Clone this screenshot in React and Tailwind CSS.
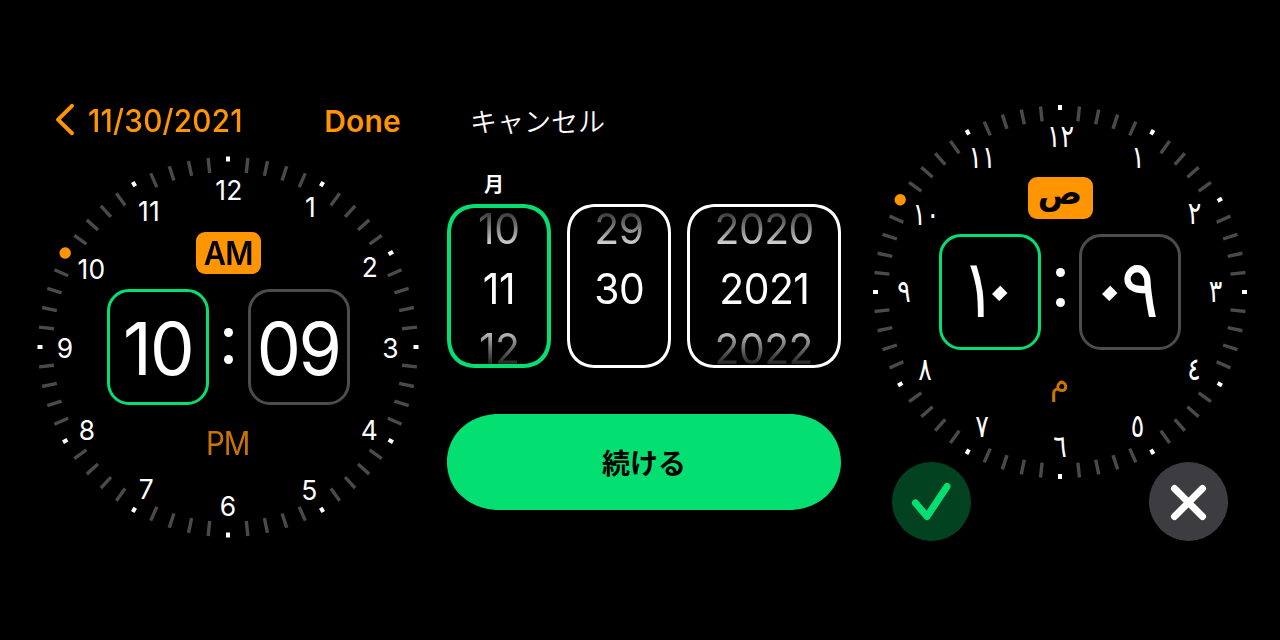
const LATIN = ["12", "1", "2", "3", "4", "5", "6", "7", "8", "9", "10", "11"];
const LATIN_POS = [[229, 190], [310.5, 207], [370, 267], [390.5, 348], [369.5, 430], [309.5, 489.5], [228, 506], [146.5, 489], [87, 430], [65, 348], [91.5, 269], [149, 211]];
const ARABIC = ["١٢", "١", "٢", "٣", "٤", "٥", "٦", "٧", "٨", "٩", "١٠", "١١"];
const ARABIC_POS = [[1060.5, 137], [1138, 158], [1194.5, 214], [1215.5, 291.5], [1194, 369.5], [1137.5, 426.5], [1060, 446.5], [982, 426.5], [925, 369.5], [904, 291.5], [926, 214.5], [982, 158]];

function Dial({ size, r, labels, pos, ox, oy, arabic }) {
  const c = size / 2;
  return (
    <svg width={size} height={size} viewBox={`0 0 ${size} ${size}`} className="col-start-1 row-start-1 overflow-visible">
      {Array.from({ length: 60 }, (_, i) => {
        const a = `rotate(${i * 6} ${c} ${c})`;
        if (i === 50) return <circle key={i} cx={c} cy={c - r + 2.5} r="5.7" fill="#ff9500" transform={a} />;
        return i % 5 === 0 ? (
          <rect key={i} x={c - 2} y={c - r} width="4" height="5" fill="#fff" transform={a} />
        ) : (
          <rect key={i} x={c - 1.7} y={c - r + 0.5} width="3.4" height="15" fill="#4a4a4c" transform={a} />
        );
      })}
      {labels.map((t, i) => (
        <text
          key={t}
          transform={`translate(${pos[i][0] - ox} ${pos[i][1] - oy + 10}) scale(${arabic ? 0.8 : 0.96} 1)`}
          textAnchor="middle"
          fill="#fff"
          className={arabic ? "font-['DejaVu_Sans',sans-serif] text-[31.5px] tracking-[-4.5px]" : "font-['Inter',sans-serif] text-[27.5px] tracking-[0.4px]"}
        >
          {t}
        </text>
      ))}
    </svg>
  );
}

function TimeBox({ active, children }) {
  return (
    <div className={`flex h-[116px] w-[102px] items-center justify-center rounded-[22px] border-3 ${active ? "border-[#04df71]" : "border-[#4c4c4c]"}`}>
      {children}
    </div>
  );
}

function ArabicZero({ width }) {
  return (
    <span className={`flex justify-center ${width}`}>
      <span className="origin-[50%_calc(50%+5px)] translate-y-[-4px] rotate-45 text-[94px] leading-none">٠</span>
    </span>
  );
}

function Wheel({ width, border, values }) {
  return (
    <div className={`flex h-[164px] flex-col items-center justify-center overflow-hidden rounded-[30px] pt-[4px] [corner-shape:superellipse(1.2)] ${width} ${border}`}>
      {values.map((v, i) => (
        <div
          key={i}
          className={`flex h-[60px] shrink-0 scale-x-95 items-center bg-clip-text text-[43px] leading-none tracking-[-0.6px] ${
            i === 0
              ? "bg-linear-to-b from-[#222] from-15% to-[#ddd] to-80% text-transparent"
              : i === 1
                ? "text-white"
                : "bg-linear-to-b from-[#ddd] from-15% to-[#111] to-85% text-transparent"
          }`}
        >
          {v}
        </div>
      ))}
    </div>
  );
}

export default function App() {
  return (
    <div className="flex h-[640px] w-[1280px] overflow-hidden bg-black font-['Inter','Noto_Sans_CJK_JP',sans-serif] text-white">
      <section className="flex w-[447px] shrink-0 flex-col pt-[100px] pl-[37px]">
        <header className="flex h-[42px] w-[364px] items-center justify-between text-[#ff9500]">
          <div className="flex items-center pl-[18px]">
            <svg width="20" height="34" viewBox="0 0 20 34" fill="none" stroke="#ff9500" strokeWidth="4" strokeLinecap="round" strokeLinejoin="round" className="overflow-visible">
              <path d="M17 1.9 L3 15.6 L17 29.2" />
            </svg>
            <span className="ml-[13px] origin-left scale-x-96 text-[31px] font-medium tracking-[0.2px]">11/30/2021</span>
          </div>
          <span className="text-[30px] font-semibold tracking-[0.2px]">Done</span>
        </header>
        <div className="mt-[14px] grid h-[382px] w-[382px] justify-items-center">
          <Dial size={382} r={190.5} labels={LATIN} pos={LATIN_POS} ox={37} oy={156} />
          <div className="col-start-1 row-start-1 flex flex-col items-center pt-[76px]">
            <div className="flex h-[42px] w-[65px] items-center justify-center rounded-[9px] bg-[#ff9500] pt-[2px]">
              <span className="scale-x-[0.93] text-[33px] font-semibold tracking-[-1px] text-black">AM</span>
            </div>
            <div className="mt-[15px] flex items-center">
              <TimeBox active><span className="scale-x-97 pt-[3px] pl-[1px] text-[73px] leading-none tracking-[-2px]">10</span></TimeBox>
              <div className="flex w-[39px] flex-col items-center gap-[18px] pb-[2px]">
                <i className="size-[9px] rounded-full bg-white" />
                <i className="size-[9px] rounded-full bg-white" />
              </div>
              <TimeBox><span className="scale-x-96 pt-[3px] text-[73px] leading-none tracking-[-2.5px]">09</span></TimeBox>
            </div>
            <span className="mt-[19px] scale-x-[0.92] text-[32px] leading-[40px] tracking-[-1px] text-[#c97600]">PM</span>
          </div>
        </div>
      </section>

      <section className="flex w-[394px] shrink-0 flex-col pt-[100px]">
        <span className="h-[42px] pl-[23px] font-['Noto_Sans_CJK_JP',sans-serif] text-[27px] leading-[42px] font-[350]">キャンセル</span>
        <span className="mt-[28px] h-[28px] w-[94px] text-center font-['Noto_Sans_CJK_JP',sans-serif] text-[20px] leading-[28px] font-bold">月</span>
        <div className="mt-[6px] flex gap-4">
          <Wheel width="w-[104px]" border="border-4 border-[#04df71]" values={["10", "11", "12"]} />
          <Wheel width="w-[104px]" border="border-3 border-white" values={["29", "30", ""]} />
          <Wheel width="w-[154px]" border="border-3 border-white" values={["2020", "2021", "2022"]} />
        </div>
        <button className="mt-[46px] h-[96px] rounded-[52px/48px] bg-[#04df71] font-['Noto_Sans_CJK_JP',sans-serif] text-[28px] font-bold text-black [corner-shape:superellipse(1.05)]">続ける</button>
      </section>

      <section className="flex flex-col pt-[105px] pl-[32px]">
        <div className="grid h-[374px] w-[374px] justify-items-center">
          <Dial size={374} r={187} labels={ARABIC} pos={ARABIC_POS} ox={873} oy={105} arabic />
          <div className="col-start-1 row-start-1 flex flex-col items-center pt-[72px] font-['DejaVu_Sans',sans-serif]">
            <div className="flex h-[42px] w-[65px] items-center justify-center rounded-[9px] bg-[#ff9500] pb-[12px]">
              <span className="text-[33px] leading-none font-bold text-black">ص</span>
            </div>
            <div className="mt-[15px] flex items-center">
              <TimeBox active>
                <span className="flex items-center pl-[2px]">
                  <span className="flex w-[18px] translate-x-[-2px] scale-x-[0.8] justify-center pb-[6px] text-[81px] leading-none">١</span>
                  <ArabicZero width="w-[20px]" />
                </span>
              </TimeBox>
              <div className="flex w-[38px] flex-col items-center gap-[21px] pb-[9px]">
                <i className="size-[9px] rounded-full bg-white" />
                <i className="size-[9px] rounded-full bg-white" />
              </div>
              <TimeBox>
                <span className="flex items-center pr-[8px]">
                  <ArabicZero width="w-[30px]" />
                  <span className="flex w-[32px] translate-x-[-1px] scale-x-[0.87] justify-center pb-[6px] text-[81px] leading-none">٩</span>
                </span>
              </TimeBox>
            </div>
            <span className="mt-[12px] scale-x-90 text-[35px] leading-[40px] text-[#c97600]">م</span>
          </div>
        </div>
        <div className="mt-[-17px] flex w-[336px] justify-between self-center">
          <div className="flex size-[79px] items-center justify-center rounded-full bg-[#024221]">
            <svg width="79" height="79" viewBox="0 0 79 79" fill="none" stroke="#04df71" strokeWidth="7" strokeLinecap="round" strokeLinejoin="round"><path d="M23.5 41 L35 54.5 L55 24.5" /></svg>
          </div>
          <div className="flex size-[79px] items-center justify-center rounded-full bg-[#3d3d41]">
            <svg width="79" height="79" viewBox="0 0 79 79" stroke="#fff" strokeWidth="7" strokeLinecap="round"><path d="M25.5 26.5 L53.5 54.5 M53.5 26.5 L25.5 54.5" /></svg>
          </div>
        </div>
      </section>
    </div>
  );
}
